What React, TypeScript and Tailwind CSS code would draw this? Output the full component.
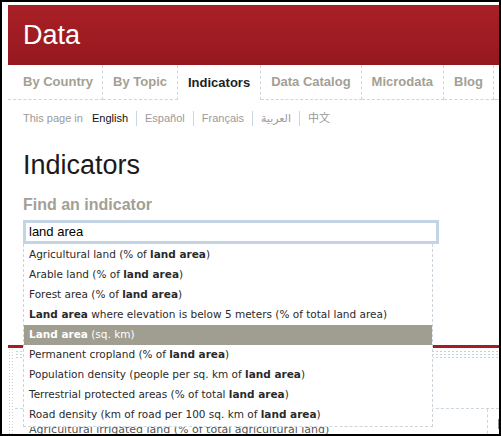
import React from 'react';

const tabs = [
    { label: 'By Country', active: false },
    { label: 'By Topic', active: false },
    { label: 'Indicators', active: true },
    { label: 'Data Catalog', active: false },
    { label: 'Microdata', active: false },
    { label: 'Blog', active: false },
];

const languages = ['Español', 'Français', 'العربية', '中文'];

// each suggestion: [before, bold, after]
const suggestions: [string, string, string][] = [
    ['Agricultural land (% of ', 'land area', ')'],
    ['Arable land (% of ', 'land area', ')'],
    ['Forest area (% of ', 'land area', ')'],
    ['', 'Land area', ' where elevation is below 5 meters (% of total land area)'],
    ['', 'Land area', ' (sq. km)'],
    ['Permanent cropland (% of ', 'land area', ')'],
    ['Population density (people per sq. km of ', 'land area', ')'],
    ['Terrestrial protected areas (% of total ', 'land area', ')'],
    ['Road density (km of road per 100 sq. km of ', 'land area', ')'],
];

const selected = 4;

export default function App() {
    return (
        <div className="w-[501px] h-[436px] bg-black p-[2px] font-['Liberation_Sans',Arial,sans-serif]">
            <div className="relative h-full overflow-hidden bg-white pl-[6px] pt-[3px]">
                {/* header */}
                <div className="flex h-[60px] items-center bg-linear-to-b from-[#a92026] to-[#96181f] pl-[15px]">
                    <span className="text-[27px] leading-none text-white">Data</span>
                </div>

                {/* tabs */}
                <nav className="flex h-[35px]">
                    {tabs.map((tab, i) => (
                        <div
                            key={tab.label}
                            className={`flex items-center border-r border-dashed border-[#cbd6df] text-[13px] font-bold ${
                                i === 0 ? 'pl-[15px] pr-[9px]' : 'px-[10px]'
                            } ${tab.active ? 'text-[#1e1e1e]' : 'border-b text-[#a39f94]'}`}
                        >
                            {tab.label}
                        </div>
                    ))}
                    <div className="flex-1 border-b border-dashed border-[#cbd6df]" />
                </nav>

                <div className="pl-[15px]">
                    {/* language switch */}
                    <div className="mt-[11px] flex h-[15px] items-center text-[11px] leading-[15px] text-[#9a9a9a]">
                        <span>This page in</span>
                        <span className="pl-[9px] pr-[8px] text-[#111]">English</span>
                        {languages.map((lang) => (
                            <span
                                key={lang}
                                className="border-l border-[#c6d8e8] px-[8px] font-['Liberation_Sans','DejaVu_Sans','Noto_Sans_CJK_SC',sans-serif]"
                            >
                                {lang}
                            </span>
                        ))}
                    </div>

                    <h1 className="mt-[23px] text-[27px] leading-[32px] text-[#1a1a1a]">Indicators</h1>
                    <h2 className="mt-[14px] text-[16px] font-bold leading-[20px] text-[#a39f94]">
                        Find an indicator
                    </h2>

                    {/* search + suggestions */}
                    <div className="relative z-10 mt-[5px] w-[416px]">
                        <div className="flex h-[24px] items-center border-[3px] border-[#c3d5e4] pl-[3px] text-[13px] text-black">
                            land area
                        </div>
                        <ul className="absolute left-0 top-full w-[410px] border-b border-l border-r border-dashed border-[#cdd5dc] bg-white pb-[1px] pt-[1px] font-['DejaVu_Sans',Verdana,sans-serif] text-[10.5px] text-[#2a2a2a]">
                            {suggestions.map(([before, bold, after], i) => (
                                <li
                                    key={i}
                                    className={`flex h-[20px] items-center whitespace-pre pl-[5px] ${
                                        i === selected ? 'bg-[#a09d91] text-white' : ''
                                    }`}
                                >
                                    {before}
                                    <b className="font-bold">{bold}</b>
                                    {after}
                                </li>
                            ))}
                        </ul>
                    </div>
                </div>

                {/* page content under the suggestion list */}
                <div className="mt-[101px]">
                    <div className="h-[3px] bg-[#a51d23]" />
                    <div className="flex">
                        <div className="w-[7px] h-[90px] bg-[radial-gradient(circle,#c4d2de_0.8px,transparent_0.9px)] bg-[length:3px_3px]" />
                        <div className="flex-1">
                            <div className="mt-[2px] h-[8px] bg-[radial-gradient(circle,#c4d2de_0.8px,transparent_0.9px)] bg-[length:4px_3px]" />
                            <div className="mt-[50px] flex border-t border-dashed border-[#cbd6df]">
                                <div className="flex-1 pl-[14px] pt-[13px] font-['DejaVu_Sans',Verdana,sans-serif] text-[11px] text-[#555]">
                                    Agricultural irrigated land (% of total agricultural land)
                                </div>
                                <div className="w-[12px] border-l border-dashed border-[#cbd6df]">
                                    <div className="ml-[10px] mt-[10px] h-[10px] w-[4px] bg-[#8a8a8a]" />
                                </div>
                            </div>
                        </div>
                    </div>
                </div>
            </div>
        </div>
    );
}
